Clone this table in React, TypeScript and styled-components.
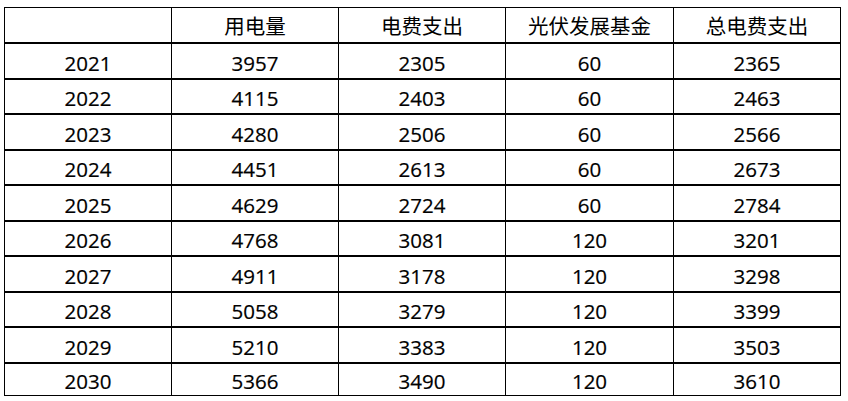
import React from "react";
import styled, { createGlobalStyle } from "styled-components";

const Global = createGlobalStyle`
  html, body { margin: 0; padding: 0; background: #ffffff; }
  body { font-family: "Open Sans", "Noto Sans CJK SC", sans-serif; color: #000; }
`;

const Page = styled.div`
  padding: 7px 0 0 4px;
`;

const Table = styled.div`
  display: grid;
  width: 837px;
  box-sizing: border-box;
  border: 1px solid #000;
  grid-template-columns: 166px 167px 167px 168px 167px;
  grid-template-rows: 34px repeat(9, 35.56px) 33px;
`;

const Cell = styled.div<{ $first?: boolean; $head?: boolean; $rowFirst?: boolean }>`
  display: flex;
  align-items: center;
  justify-content: center;
  box-sizing: border-box;
  border-left: ${(p) => (p.$first ? "none" : "1px solid #000")};
  border-top: ${(p) => (p.$rowFirst ? "none" : "2px solid #000")};
  font-family: ${(p) =>
    p.$head ? '"Noto Sans CJK SC", sans-serif' : '"Open Sans", "Noto Sans CJK SC", sans-serif'};
  font-size: ${(p) => (p.$head ? "20.5px" : "20.5px")};
  line-height: 1;
  padding-top: ${(p) => (p.$head ? "0" : "4px")};
  color: #000;
  -webkit-text-stroke: ${(p) => (p.$head ? "0" : "0.2px #000")};
`;

const header = ["", "用电量", "电费支出", "光伏发展基金", "总电费支出"];
const rows = [
  ["2021", "3957", "2305", "60", "2365"],
  ["2022", "4115", "2403", "60", "2463"],
  ["2023", "4280", "2506", "60", "2566"],
  ["2024", "4451", "2613", "60", "2673"],
  ["2025", "4629", "2724", "60", "2784"],
  ["2026", "4768", "3081", "120", "3201"],
  ["2027", "4911", "3178", "120", "3298"],
  ["2028", "5058", "3279", "120", "3399"],
  ["2029", "5210", "3383", "120", "3503"],
  ["2030", "5366", "3490", "120", "3610"],
];

export default function App() {
  return (
    <>
      <Global />
      <Page>
        <Table>
          {header.map((h, i) => (
            <Cell key={"h" + i} $head $rowFirst $first={i === 0}>
              {h}
            </Cell>
          ))}
          {rows.map((r, ri) =>
            r.map((v, ci) => (
              <Cell key={ri + "-" + ci} $first={ci === 0}>
                {v}
              </Cell>
            ))
          )}
        </Table>
      </Page>
    </>
  );
}
